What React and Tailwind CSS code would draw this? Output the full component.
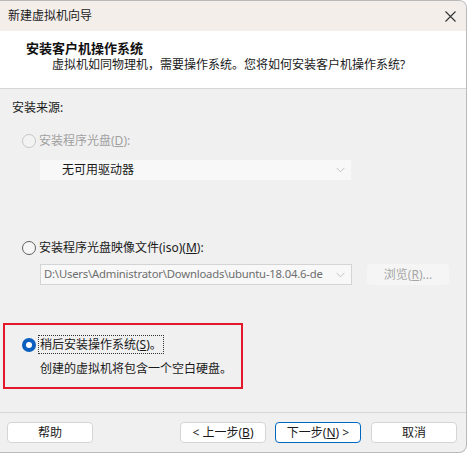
import React from 'react';

const FONT = { fontFamily: '"Noto Sans", "Noto Sans CJK SC", sans-serif' };

const Radio = ({ state }) => {
  if (state === 'checked') {
    return (
      <span className='w-[14px] h-[14px] rounded-full bg-[#0a5fbf] flex items-center justify-center shrink-0'>
        <span className='w-[6px] h-[6px] rounded-full bg-white' />
      </span>
    );
  }
  if (state === 'disabled') {
    return <span className='w-[14px] h-[14px] rounded-full border border-[#c6c6c6] bg-[#f3f3f3] shrink-0' />;
  }
  return <span className='w-[14px] h-[14px] rounded-full border border-[#5f5f5f] bg-[#f6f6f6] shrink-0' />;
};

const Chevron = ({ color }) => (
  <svg width='9' height='6' viewBox='0 0 9 6' className='shrink-0'>
    <path d='M0.5 0.8 L4.5 4.8 L8.5 0.8' fill='none' stroke={color} strokeWidth='1' />
  </svg>
);

const Button = ({ children, primary, className = '' }) => (
  <button
    className={
      (primary
        ? 'border-[#0067c0] '
        : 'border-[#d5d5d5] ') +
      'w-[86px] h-[21px] rounded-[4px] border bg-white text-[12px] text-[#1a1a1a] leading-none flex items-center justify-center ' +
      className
    }
  >
    {children}
  </button>
);

export default function App() {
  return (
    <div className='w-[468px] h-[453px] bg-white' style={FONT}>
      <div className='w-[467px] h-[453px] flex flex-col bg-[#f0f0f0] border-t border-r border-b border-[#b9b9b9] rounded-tr-[8px] rounded-br-[8px] overflow-hidden'>
        {/* title bar */}
        <div className='h-[30px] shrink-0 bg-[#f4eeeb] flex items-center justify-between pl-[8px] pr-[10px]'>
          <span className='text-[12px] text-[#1a1a1a]'>新建虚拟机向导</span>
          <svg width='11' height='11' viewBox='0 0 11 11'>
            <path d='M0.5 0.5 L10.5 10.5 M10.5 0.5 L0.5 10.5' stroke='#333' strokeWidth='1.1' />
          </svg>
        </div>

        {/* header */}
        <div className='h-[58px] shrink-0 bg-white border-b border-[#d6d6d6] pt-[8px]'>
          <div className='pl-[26px] text-[13px] font-bold text-[#111] leading-[18px]'>安装客户机操作系统</div>
          <div className='pl-[52px] text-[12px] text-[#1a1a1a] leading-[16px]'>
            虚拟机如同物理机，需要操作系统。您将如何安装客户机操作系统?
          </div>
        </div>

        {/* body */}
        <div className='flex-1 flex flex-col pt-[11px]'>
          <div className='pl-[12px] text-[12px] leading-[16px] text-[#1a1a1a]'>安装来源:</div>

          <div className='mt-[17px] pl-[22px] flex items-center gap-[3px] h-[16px]'>
            <Radio state='disabled' />
            <span className='text-[12px] text-[#a0a0a0]'>
              安装程序光盘(<span className='underline'>D</span>):
            </span>
          </div>

          <div className='mt-[11px] ml-[40px] w-[311px] h-[20px] bg-[#f8f8f8] flex items-center justify-between pl-[22px] pr-[6px]'>
            <span className='text-[12px] text-[#1a1a1a]'>无可用驱动器</span>
            <Chevron color='#c4c4c4' />
          </div>

          <div className='mt-[60px] pl-[22px] flex items-center gap-[3px] h-[16px]'>
            <Radio state='normal' />
            <span className='text-[12px] text-[#1a1a1a]'>
              安装程序光盘映像文件(iso)(<span className='underline'>M</span>):
            </span>
          </div>

          <div className='mt-[8px] flex items-center'>
            <div className='ml-[40px] w-[312px] h-[21px] bg-[#f8f8f8] border border-[#d4d4d4] flex items-center pl-[3px] pr-[6px]'>
              <span className='flex-1 text-[11.3px] text-[#6e6e6e] whitespace-nowrap tracking-[-0.2px]'>
                D:\Users\Administrator\Downloads\ubuntu-18.04.6-de
              </span>
              <Chevron color='#c4c4c4' />
            </div>
            <div className='ml-[15px] w-[82px] h-[21px] rounded-[4px] bg-[#f5f5f5] flex items-center justify-center text-[12px] text-[#a6a6a6]'>
              浏览(<span className='underline'>R</span>)...
            </div>
          </div>

          <div className='mt-[38px] ml-[3px] w-[240px] h-[66px] border-2 border-[#e3192b] flex flex-col'>
            <div className='mt-[10px] ml-[17px] flex items-center gap-[2px]'>
              <Radio state='checked' />
              <span className='border border-dotted border-[#333] px-[1px] h-[19px] flex items-center text-[12px] text-[#1a1a1a]'>
                稍后安装操作系统(<span className='underline'>S</span>)。
              </span>
            </div>
            <div className='mt-[7px] ml-[35px] text-[12px] text-[#1a1a1a] leading-[16px]'>
              创建的虚拟机将包含一个空白硬盘。
            </div>
          </div>
        </div>

        {/* footer */}
        <div className='h-[40px] shrink-0 border-t border-[#d6d6d6] flex items-start pt-[9px] pl-[7px]'>
          <Button>帮助</Button>
          <Button className='ml-[87px]'>&lt; 上一步(<span className='underline'>B</span>)</Button>
          <Button primary className='ml-[9px]'>下一步(<span className='underline'>N</span>) &gt;</Button>
          <Button className='ml-[10px]'>取消</Button>
        </div>
      </div>
    </div>
  );
}
